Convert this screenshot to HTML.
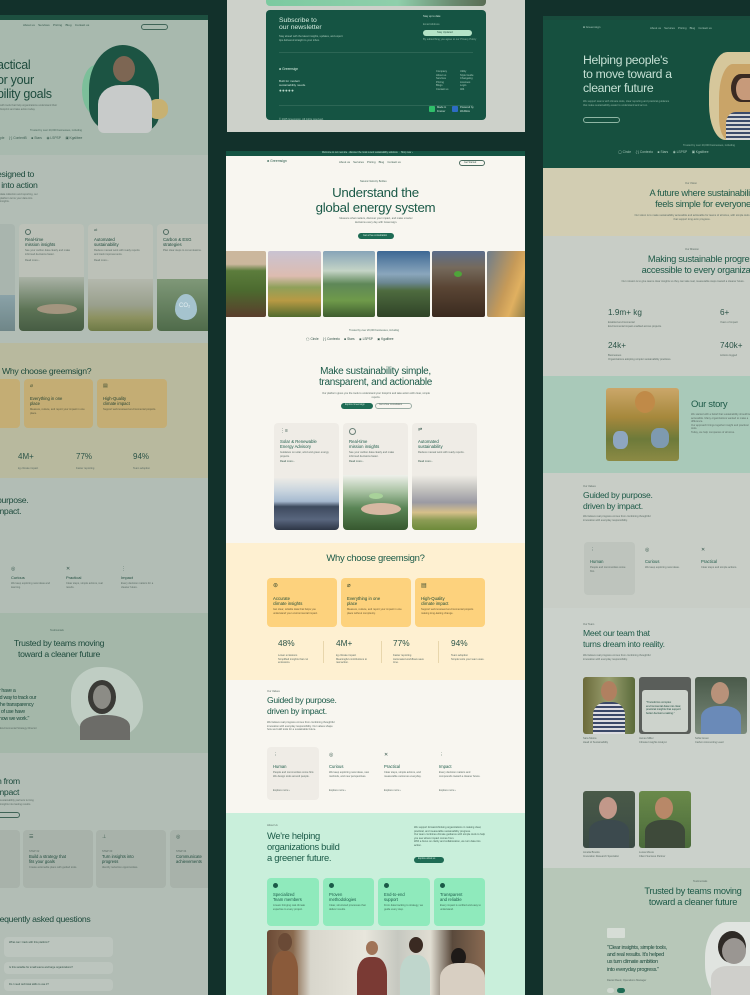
<!DOCTYPE html>
<html><head><meta charset="utf-8"><style>
*{margin:0;padding:0;box-sizing:border-box}
body{width:750px;height:995px;background:#12312b;position:relative;overflow:hidden;font-family:"Liberation Sans",sans-serif}
.a{position:absolute}
.t{position:absolute;white-space:nowrap;line-height:1.1}
.tiny{position:absolute;font-size:2.6px;line-height:1.35;color:#5a6b64}
.h{position:absolute;color:#1b5a48;letter-spacing:-0.3px;line-height:1.1;white-space:nowrap}
.r{border-radius:4px}
</style></head><body>

<!-- ============ LEFT PANEL ============ -->
<div class="a" style="left:0;top:15px;width:208px;height:980px;background:#b2bdb5;overflow:hidden">
  <div class="a" style="left:0;top:0;width:208px;height:5px;background:#1d5040"></div>
  <div class="a" style="left:0;top:5px;width:208px;height:135px;background:#a8b9ae"></div>
  <div class="t" style="left:23px;top:9px;font-size:3px;color:#33574a">About us &nbsp;&nbsp; Services &nbsp;&nbsp; Pricing &nbsp;&nbsp; Blog &nbsp;&nbsp; Contact us</div>
  <div class="a" style="left:141px;top:9px;width:27px;height:6px;border:0.6px solid #3f6457;border-radius:4px"></div>
  <div class="h" style="left:-3px;top:43px;font-size:12.5px;color:#1e4b3d;line-height:14.5px">actical<br>or your<br>bility goals</div>
  <div class="tiny" style="left:0;top:89px;width:62px">with tools that help organizations understand their footprint and take action today.</div>
  <!-- hero blob -->
  <div class="a" style="left:82px;top:50px;width:28px;height:50px;background:#7cbf9a;border-radius:50% 40% 40% 50%"></div>
  <div class="a" style="left:89px;top:30px;width:70px;height:88px;background:#1c5443;border-radius:48% 52% 30% 40%/50% 50% 20% 30%"></div>
  <div class="a" style="left:148px;top:84px;width:20px;height:20px;background:#c7b172;border-radius:45%"></div>
  <div class="a" style="left:113px;top:41px;width:22px;height:26px;background:#7d6653;border-radius:50%"></div>
  <div class="a" style="left:98px;top:70px;width:54px;height:48px;background:#c8cbca;border-radius:40% 40% 6px 6px"></div>
  <div class="t" style="left:30px;top:115px;font-size:2.6px;color:#47665a">Trusted by over 20,000 businesses, including</div>
  <div class="t" style="left:0;top:122px;font-size:3.3px;color:#3d5e52">ple &nbsp;&nbsp;&nbsp; {·} ContextB &nbsp;&nbsp;&nbsp; ■ Stars &nbsp;&nbsp;&nbsp; ◉ LSPSP &nbsp;&nbsp;&nbsp; ▣ Kgalibee</div>
  <!-- section designed -->
  <div class="h" style="left:-3px;top:154px;font-size:8.7px;color:#1e4b3d;line-height:10.5px">esigned to<br>t into action</div>
  <div class="tiny" style="left:0;top:178px;width:40px">data collection and reporting, our platform turns your data into insights.</div>
  <div class="a r" style="left:-6px;top:209px;width:21px;height:107px;background:#a9b5ae"></div>
  <div class="a" style="left:-6px;top:280px;width:21px;height:36px;background:linear-gradient(#8aa2a8,#6f8688)"></div>
  <div class="a r" style="left:19px;top:209px;width:65px;height:107px;background:#bcc1b8;overflow:hidden">
    <div class="a" style="left:6px;top:5px;width:6px;height:6px;border:0.7px solid #4e6a60;border-radius:50%"></div>
    <div class="t" style="left:6px;top:14px;font-size:4.3px;color:#1f4b3d;line-height:4.8px">Real-time<br>mission insights</div>
    <div class="tiny" style="left:6px;top:25px;width:50px">See your carbon data clearly and make informed decisions faster.</div>
    <div class="tiny" style="left:6px;top:35px">Read more ›</div>
    <div class="a" style="left:0;top:53px;width:65px;height:54px;background:linear-gradient(#aab3a6,#5d7456 60%,#465c43)"></div>
    <div class="a" style="left:18px;top:80px;width:40px;height:10px;background:#a3957f;border-radius:50%"></div>
  </div>
  <div class="a r" style="left:88px;top:209px;width:65px;height:107px;background:#bcc1b8;overflow:hidden">
    <div class="t" style="left:6px;top:4px;font-size:4px;color:#4e6a60">⇌</div>
    <div class="t" style="left:6px;top:14px;font-size:4.3px;color:#1f4b3d;line-height:4.8px">Automated<br>sustainability</div>
    <div class="tiny" style="left:6px;top:25px;width:50px">Reduce manual work with ready reports and track improvements.</div>
    <div class="tiny" style="left:6px;top:35px">Read more ›</div>
    <div class="a" style="left:0;top:55px;width:65px;height:52px;background:linear-gradient(#b4b8ad,#9aa08d 50%,#8c915f 75%,#6d7a46)"></div>
  </div>
  <div class="a r" style="left:157px;top:209px;width:60px;height:107px;background:#bcc1b8;overflow:hidden">
    <div class="a" style="left:6px;top:5px;width:6px;height:6px;border:0.7px solid #4e6a60;border-radius:50%"></div>
    <div class="t" style="left:6px;top:14px;font-size:4.3px;color:#1f4b3d;line-height:4.8px">Carbon &amp; ESG<br>strategies</div>
    <div class="tiny" style="left:6px;top:25px;width:50px">Plan clear steps to cut emissions.</div>
    <div class="a" style="left:0;top:55px;width:60px;height:52px;background:linear-gradient(#7f9878,#4f6b4a)"></div>
    <div class="a" style="left:18px;top:70px;width:22px;height:26px;background:#a5c3ce;border-radius:50% 50% 50% 50%/60% 60% 40% 40%"></div>
    <div class="t" style="left:22px;top:79px;font-size:6px;color:#e4eef0">CO₂</div>
  </div>
  <!-- yellow -->
  <div class="a" style="left:0;top:328px;width:208px;height:135px;background:#b8b99e"></div>
  <div class="h" style="left:2px;top:352px;font-size:8.7px;color:#1e4b3d">Why choose greemsign?</div>
  <div class="a r" style="left:-6px;top:364px;width:26px;height:49px;background:#c4ad74"></div>
  <div class="a r" style="left:24px;top:364px;width:69px;height:49px;background:#c4ad74">
    <div class="t" style="left:6px;top:5px;font-size:5px;color:#3d4e33">⌀</div>
    <div class="t" style="left:6px;top:18px;font-size:4.2px;color:#1f3f30;line-height:4.7px">Everything in one<br>place</div>
    <div class="tiny" style="left:6px;top:29px;width:55px;color:#5a5a40">Measure, reduce, and report your impact in one place.</div>
  </div>
  <div class="a r" style="left:97px;top:364px;width:70px;height:49px;background:#c4ad74">
    <div class="t" style="left:6px;top:5px;font-size:5px;color:#3d4e33">▤</div>
    <div class="t" style="left:6px;top:18px;font-size:4.2px;color:#1f3f30;line-height:4.7px">High-Quality<br>climate impact</div>
    <div class="tiny" style="left:6px;top:29px;width:55px;color:#5a5a40">Support well-reviewed environmental projects.</div>
  </div>
  <div class="t" style="left:18px;top:438px;font-size:8px;color:#2c5448">4M+</div>
  <div class="t" style="left:76px;top:438px;font-size:8px;color:#2c5448">77%</div>
  <div class="t" style="left:133px;top:438px;font-size:8px;color:#2c5448">94%</div>
  <div class="tiny" style="left:18px;top:452px">kg climate impact</div>
  <div class="tiny" style="left:76px;top:452px">Faster reporting</div>
  <div class="tiny" style="left:133px;top:452px">Team adoption</div>
  <!-- values -->
  <div class="h" style="left:-3px;top:480px;font-size:8.7px;color:#1e4b3d;line-height:10.5px">purpose.<br>mpact.</div>
  <div class="t" style="left:11px;top:552px;font-size:5px;color:#3a5a4f">◎</div>
  <div class="t" style="left:66px;top:552px;font-size:5px;color:#3a5a4f">✕</div>
  <div class="t" style="left:121px;top:552px;font-size:5px;color:#3a5a4f">⋮</div>
  <div class="t" style="left:11px;top:561px;font-size:4px;color:#1f4b3d">Curious</div>
  <div class="t" style="left:66px;top:561px;font-size:4px;color:#1f4b3d">Practical</div>
  <div class="t" style="left:121px;top:561px;font-size:4px;color:#1f4b3d">Impact</div>
  <div class="tiny" style="left:11px;top:567px;width:40px">We keep exploring new ideas and learning.</div>
  <div class="tiny" style="left:66px;top:567px;width:40px">Clear steps, simple actions, real results.</div>
  <div class="tiny" style="left:121px;top:567px;width:40px">Every decision matters for a cleaner future.</div>
  <!-- testimonial -->
  <div class="a" style="left:0;top:598px;width:208px;height:140px;background:#a4b7a9"></div>
  <div class="t" style="left:50px;top:615px;font-size:2.5px;color:#47665a">Testimonials</div>
  <div class="h" style="left:0;top:623px;width:118px;text-align:center;font-size:8.7px;color:#1e4b3d;line-height:11px">Trusted by teams moving<br>toward a cleaner future</div>
  <div class="h" style="left:-3px;top:673px;font-size:5.3px;color:#1e4b3d;line-height:7px">ly have a<br>ed way to track our<br>The transparency<br>e of use have<br>l how we work."</div>
  <div class="tiny" style="left:0;top:712px">Environmental Strategy Director</div>
  <div class="a" style="left:71px;top:652px;width:72px;height:72px;background:#bfcdc3;border-radius:40% 55% 45% 50%"></div>
  <div class="a" style="left:88px;top:665px;width:28px;height:34px;background:#3a3a36;border-radius:50%"></div>
  <div class="a" style="left:93px;top:670px;width:18px;height:24px;background:#8c8c86;border-radius:50%"></div>
  <div class="a" style="left:80px;top:700px;width:50px;height:25px;background:#6c6c68;border-radius:45% 45% 0 0"></div>
  <!-- growth -->
  <div class="h" style="left:-3px;top:761px;font-size:8.7px;color:#1e4b3d;line-height:11px">h from<br>mpact</div>
  <div class="tiny" style="left:0;top:784px;width:35px">sustainability partners turning insights into lasting results.</div>
  <div class="a" style="left:-6px;top:797px;width:26px;height:6px;border:0.6px solid #3f6457;border-radius:4px"></div>
  <div class="a r" style="left:-6px;top:815px;width:26px;height:58px;background:#a8b2aa"></div>
  <div class="a r" style="left:23px;top:815px;width:70px;height:58px;background:#a8b2aa">
    <div class="t" style="left:6px;top:5px;font-size:5px;color:#3a5a4f">☰</div>
    <div class="tiny" style="left:6px;top:20px">STEP 02</div>
    <div class="t" style="left:6px;top:25px;font-size:4.2px;color:#1f4b3d;line-height:4.7px">Build a strategy that<br>fits your goals</div>
    <div class="tiny" style="left:6px;top:36px;width:58px">Create actionable plans with guided tools.</div>
  </div>
  <div class="a r" style="left:96px;top:815px;width:70px;height:58px;background:#a8b2aa">
    <div class="t" style="left:6px;top:5px;font-size:5px;color:#3a5a4f">⊥</div>
    <div class="tiny" style="left:6px;top:20px">STEP 03</div>
    <div class="t" style="left:6px;top:25px;font-size:4.2px;color:#1f4b3d;line-height:4.7px">Turn insights into<br>progress</div>
    <div class="tiny" style="left:6px;top:36px;width:58px">Identify reduction opportunities.</div>
  </div>
  <div class="a r" style="left:170px;top:815px;width:50px;height:58px;background:#a8b2aa">
    <div class="t" style="left:6px;top:5px;font-size:5px;color:#3a5a4f">◎</div>
    <div class="tiny" style="left:6px;top:20px">STEP 04</div>
    <div class="t" style="left:6px;top:25px;font-size:4.2px;color:#1f4b3d;line-height:4.7px">Communicate<br>achievements</div>
  </div>
  <div class="h" style="left:-3px;top:900px;font-size:8.7px;color:#1e4b3d">requently asked questions</div>
  <div class="a r" style="left:4px;top:922px;width:109px;height:20px;background:#bcc5be"><div class="tiny" style="left:5px;top:4px;color:#2f4f44">What can I track with this platform?</div></div>
  <div class="a r" style="left:4px;top:947px;width:109px;height:12px;background:#bcc5be"><div class="tiny" style="left:5px;top:4px;color:#2f4f44">Is this suitable for small teams and large organizations?</div></div>
  <div class="a r" style="left:4px;top:964px;width:109px;height:12px;background:#bcc5be"><div class="tiny" style="left:5px;top:4px;color:#2f4f44">Do I need technical skills to use it?</div></div>
</div>

<!-- ============ CENTER TOP PANEL ============ -->
<div class="a" style="left:227px;top:0;width:298px;height:132px;background:#cdd1ca;overflow:hidden">
  <div class="a" style="left:39px;top:-4px;width:220px;height:10px;border-radius:4px;background:linear-gradient(90deg,#7ccaa0,#8fcfab 60%,#6a8a70 85%,#5a6d55)"></div>
  <div class="a" style="left:39px;top:10px;width:220px;height:110px;border-radius:4px;background:#155443">
    <div class="t" style="left:13px;top:7px;font-size:6.8px;color:#d5ecdf;line-height:7px">Subscribe to<br>our newsletter</div>
    <div class="tiny" style="left:13px;top:25px;width:65px;color:#a9cbbb">Stay ahead with the latest insights, updates, and expert tips delivered straight to your inbox.</div>
    <div class="tiny" style="left:157px;top:5px;color:#cfe4da">Stay up to date</div>
    <div class="tiny" style="left:157px;top:13px;color:#8fb7a5">Email Address</div>
    <div class="a" style="left:157px;top:20px;width:49px;height:6px;border-radius:4px;background:#b5e3c7"></div>
    <div class="tiny" style="left:171px;top:21px;color:#2d5a48">Stay Updated</div>
    <div class="tiny" style="left:157px;top:28px;color:#8fb7a5">By subscribing you agree to our Privacy Policy</div>
    <div class="a" style="left:13px;top:42px;width:194px;height:0.5px;background:#2c6655"></div>
    <div class="t" style="left:13px;top:58px;font-size:3.3px;color:#d5ecdf">♣ Greemsign</div>
    <div class="tiny" style="left:13px;top:69px;color:#cfe4da;font-size:3px">Built for modern<br>sustainability needs.</div>
    <div class="t" style="left:13px;top:79px;font-size:4.5px;color:#b8d8ca;letter-spacing:0.3px">●●●●●</div>
    <div class="tiny" style="left:170px;top:60px;color:#a9cbbb">Company<br>About us<br>Services<br>Pricing<br>Blogs<br>Contact us</div>
    <div class="tiny" style="left:194px;top:60px;color:#a9cbbb">Utility<br>Style Guide<br>Changelog<br>Licenses<br>Login<br>404</div>
    <div class="a" style="left:13px;top:95px;width:194px;height:0.5px;background:#2c6655"></div>
    <div class="tiny" style="left:13px;top:108px;color:#a9cbbb">© 2025 Greemsign. All rights reserved.</div>
    <div class="a" style="left:163px;top:96px;width:6px;height:6px;background:#2fbf6a;border-radius:1px"></div>
    <div class="tiny" style="left:171px;top:96px;color:#cfe4da">Made in<br>Framer</div>
    <div class="a" style="left:186px;top:96px;width:6px;height:6px;background:#2d6cc4;border-radius:1px"></div>
    <div class="tiny" style="left:194px;top:96px;color:#cfe4da">Powered by<br>Webflow</div>
  </div>
</div>

<!-- ============ CENTER MAIN PANEL ============ -->
<div class="a" style="left:226px;top:151px;width:299px;height:844px;background:#f8f6f0;overflow:hidden">
  <div class="a" style="left:0;top:0;width:299px;height:5px;background:#155443"></div>
  <div class="tiny" style="left:96px;top:0.5px;color:#bfe0d0;font-size:2.3px">Welcome to our new site - discover the most recent sustainability solutions &nbsp;·&nbsp; Shop now ›</div>
  <div class="t" style="left:41px;top:9px;font-size:3.4px;color:#2a5a4a">♣ Greemsign</div>
  <div class="t" style="left:113px;top:9.5px;font-size:2.8px;color:#3c5c50">About us &nbsp;&nbsp; Services &nbsp;&nbsp; Pricing &nbsp;&nbsp; Blog &nbsp;&nbsp; Contact us</div>
  <div class="a" style="left:233px;top:8.5px;width:26px;height:6px;border:0.5px solid #4b6b5f;border-radius:4px"></div>
  <div class="tiny" style="left:238px;top:9.5px;color:#33574a;font-size:2.4px">Get Started</div>
  <div class="t" style="left:134px;top:30px;font-size:2.6px;color:#4b6b5f">Natural Velocity Bottles</div>
  <div class="h" style="left:0;top:35px;width:299px;text-align:center;font-size:13.3px;line-height:14.5px;color:#1b5a48">Understand the<br>global energy system</div>
  <div class="tiny" style="left:110px;top:66px;width:80px;text-align:center">Measure what matters, discover your impact, and make smarter decisions every day with Greemsign.</div>
  <div class="a" style="left:132px;top:82px;width:36px;height:6px;border-radius:4px;background:#1e6b54"></div>
  <div class="tiny" style="left:137px;top:83px;color:#d5ecdf;font-size:2.4px">Get a free consultation</div>
  <!-- images -->
  <div class="a" style="left:0;top:100px;width:40px;height:66px;background:linear-gradient(#cbb79d 0 20%,#5c7d3c 30%,#4c6a2f 60%,#5a3e2c);border-radius:0 2px 2px 0"></div>
  <div class="a" style="left:42px;top:100px;width:53px;height:66px;background:linear-gradient(#c9c3d2,#ddbcb0 38%,#8fa05a 55%,#b89a44 75%,#516a2e);border-radius:2px"></div>
  <div class="a" style="left:97px;top:100px;width:52px;height:66px;background:linear-gradient(#87a4b8,#c4d4c6 30%,#5e8758 50%,#6f9a4a 75%,#3e5c2f);border-radius:2px"></div>
  <div class="a" style="left:151px;top:100px;width:53px;height:66px;background:linear-gradient(#3d6894,#8aa6bc 35%,#6b8792 48%,#4e6b3f 60%,#2f4327);border-radius:2px"></div>
  <div class="a" style="left:206px;top:100px;width:53px;height:66px;background:linear-gradient(#5b6d8a,#756a5c 25%,#5a4534 55%,#3a2a1f);border-radius:2px"></div>
  <div class="a" style="left:228px;top:120px;width:8px;height:6px;background:#4fa43a;border-radius:50%"></div>
  <div class="a" style="left:261px;top:100px;width:40px;height:66px;background:linear-gradient(110deg,#6e7d8c,#c69a58 50%,#e0b060 70%,#8a7a45);border-radius:2px 0 0 2px"></div>
  <div class="t" style="left:123px;top:179px;font-size:2.5px;color:#4b6b5f">Trusted by over 20,000 businesses, including</div>
  <div class="t" style="left:80px;top:186.5px;font-size:3.2px;color:#2f4f44">◯ Circle &nbsp;&nbsp;&nbsp; {·} Contexto &nbsp;&nbsp;&nbsp; ■ Stars &nbsp;&nbsp;&nbsp; ◉ LSPSP &nbsp;&nbsp;&nbsp; ▣ Kgalibee</div>
  <div class="h" style="left:0;top:215px;width:299px;text-align:center;font-size:10px;line-height:11px;color:#1b5a48">Make sustainability simple,<br>transparent, and actionable</div>
  <div class="tiny" style="left:95px;top:241px;width:110px;text-align:center">Our platform gives you the tools to understand your footprint and take action with clear, simple reports.</div>
  <div class="a" style="left:115px;top:252px;width:32px;height:6px;border-radius:4px;background:#1e6b54"></div>
  <div class="a" style="left:149px;top:252px;width:37px;height:6px;border-radius:4px;border:0.5px solid #9aaca4"></div>
  <div class="tiny" style="left:119px;top:253px;color:#d5ecdf;font-size:2.3px">Explore Greemsign</div>
  <div class="tiny" style="left:153px;top:253px;font-size:2.3px">Get a free consultation</div>
  <!-- cards -->
  <div class="a r" style="left:48px;top:272px;width:65px;height:107px;background:#efece6;overflow:hidden">
    <div class="t" style="left:6px;top:6px;font-size:5px;color:#3a5a4f">⋮≡</div>
    <div class="t" style="left:6px;top:17px;font-size:4.3px;line-height:4.9px;color:#1b5a48">Solar &amp; Renewable<br>Energy Advisory</div>
    <div class="tiny" style="left:6px;top:28px;width:52px">Guidance on solar, wind and green energy projects.</div>
    <div class="tiny" style="left:6px;top:37px;color:#33574a">Read more ›</div>
    <div class="a" style="left:0;top:55px;width:65px;height:52px;background:linear-gradient(#ecebe6,#c8d4de 25%,#a6bad0 45%,#3d4a5e 55%,#59667e 80%,#2d3646)"></div>
  </div>
  <div class="a r" style="left:117px;top:272px;width:65px;height:107px;background:#efece6;overflow:hidden">
    <div class="a" style="left:6px;top:5px;width:7px;height:7px;border:0.8px solid #6b8078;border-radius:50%"></div>
    <div class="t" style="left:6px;top:17px;font-size:4.3px;line-height:4.9px;color:#1b5a48">Real-time<br>mission insights</div>
    <div class="tiny" style="left:6px;top:28px;width:52px">See your carbon data clearly and make informed decisions faster.</div>
    <div class="tiny" style="left:6px;top:37px;color:#33574a">Read more ›</div>
    <div class="a" style="left:0;top:52px;width:65px;height:55px;background:linear-gradient(#eef0ea,#a9c2a3 30%,#5a8556 60%,#37582f)"></div>
    <div class="a" style="left:18px;top:80px;width:40px;height:12px;background:#d6b8a2;border-radius:50%"></div>
    <div class="a" style="left:26px;top:70px;width:14px;height:6px;background:#a8d29a;border-radius:50%"></div>
  </div>
  <div class="a r" style="left:186px;top:272px;width:65px;height:107px;background:#efece6;overflow:hidden">
    <div class="t" style="left:6px;top:5px;font-size:5px;color:#3a5a4f">⇌</div>
    <div class="t" style="left:6px;top:17px;font-size:4.3px;line-height:4.9px;color:#1b5a48">Automated<br>sustainability</div>
    <div class="tiny" style="left:6px;top:28px;width:52px">Reduce manual work with ready reports.</div>
    <div class="tiny" style="left:6px;top:37px;color:#33574a">Read more ›</div>
    <div class="a" style="left:0;top:52px;width:65px;height:55px;background:linear-gradient(#efece6,#c4c3c0 25%,#9b9aa3 50%,#d6c08a 68%,#8c9c55 82%,#6d8a3a)"></div>
  </div>
  <!-- yellow section -->
  <div class="a" style="left:0;top:392px;width:299px;height:137px;background:#fef0d1"></div>
  <div class="h" style="left:0;top:403px;width:299px;text-align:center;font-size:9.5px;color:#1b5a48">Why choose greemsign?</div>
  <div class="a r" style="left:41px;top:427px;width:70px;height:49px;background:#fdd27d">
    <div class="t" style="left:6px;top:5px;font-size:6px;color:#3d4e33">⊛</div>
    <div class="t" style="left:6px;top:19px;font-size:4.3px;line-height:4.8px;color:#1b4a38">Accurate<br>climate insights</div>
    <div class="tiny" style="left:6px;top:30px;width:55px;color:#6a5a34">Get clear, reliable data that helps you understand your environmental impact.</div>
  </div>
  <div class="a r" style="left:115px;top:427px;width:70px;height:49px;background:#fdd27d">
    <div class="t" style="left:6px;top:5px;font-size:6px;color:#3d4e33">⌀</div>
    <div class="t" style="left:6px;top:19px;font-size:4.3px;line-height:4.8px;color:#1b4a38">Everything in one<br>place</div>
    <div class="tiny" style="left:6px;top:30px;width:55px;color:#6a5a34">Measure, reduce, and report your impact in one place without complexity.</div>
  </div>
  <div class="a r" style="left:189px;top:427px;width:70px;height:49px;background:#fdd27d">
    <div class="t" style="left:6px;top:5px;font-size:6px;color:#3d4e33">▤</div>
    <div class="t" style="left:6px;top:19px;font-size:4.3px;line-height:4.8px;color:#1b4a38">High-Quality<br>climate impact</div>
    <div class="tiny" style="left:6px;top:30px;width:55px;color:#6a5a34">Support well-reviewed environmental projects making long-lasting change.</div>
  </div>
  <div class="t" style="left:52px;top:488px;font-size:8.3px;color:#2c5448">48%</div>
  <div class="t" style="left:110px;top:488px;font-size:8.3px;color:#2c5448">4M+</div>
  <div class="t" style="left:167px;top:488px;font-size:8.3px;color:#2c5448">77%</div>
  <div class="t" style="left:225px;top:488px;font-size:8.3px;color:#2c5448">94%</div>
  <div class="tiny" style="left:52px;top:503px;width:36px">Lower emissions<br>Simplified insights that cut emissions.</div>
  <div class="tiny" style="left:110px;top:503px;width:36px">kg climate impact<br>Meaningful contributions to real action.</div>
  <div class="tiny" style="left:167px;top:503px;width:36px">Faster reporting<br>Automated workflows save time.</div>
  <div class="tiny" style="left:225px;top:503px;width:36px">Team adoption<br>Simple tools your team uses.</div>
  <div class="a" style="left:97px;top:490px;width:0.5px;height:22px;background:#e8d6ac"></div>
  <div class="a" style="left:155px;top:490px;width:0.5px;height:22px;background:#e8d6ac"></div>
  <div class="a" style="left:212px;top:490px;width:0.5px;height:22px;background:#e8d6ac"></div>
  <!-- values -->
  <div class="tiny" style="left:41px;top:539px">Our Values</div>
  <div class="h" style="left:41px;top:544px;font-size:8.6px;line-height:11px;color:#1b5a48">Guided by purpose.<br>driven by impact.</div>
  <div class="tiny" style="left:41px;top:570px;width:70px">We believe real progress comes from combining thoughtful innovation with everyday responsibility. Our values shape how we build tools for a sustainable future.</div>
  <div class="a r" style="left:41px;top:596px;width:52px;height:53px;background:#efece6"></div>
  <div class="t" style="left:47px;top:602px;font-size:4.5px;color:#3a5a4f">⋮</div>
  <div class="t" style="left:103px;top:602px;font-size:5px;color:#3a5a4f">◎</div>
  <div class="t" style="left:158px;top:602px;font-size:5px;color:#3a5a4f">✕</div>
  <div class="t" style="left:213px;top:602px;font-size:4.5px;color:#3a5a4f">⋮</div>
  <div class="t" style="left:47px;top:614px;font-size:4.2px;color:#1b5a48">Human</div>
  <div class="t" style="left:103px;top:614px;font-size:4.2px;color:#1b5a48">Curious</div>
  <div class="t" style="left:158px;top:614px;font-size:4.2px;color:#1b5a48">Practical</div>
  <div class="t" style="left:213px;top:614px;font-size:4.2px;color:#1b5a48">Impact</div>
  <div class="tiny" style="left:47px;top:620px;width:42px">People and communities come first. We design tools around people.</div>
  <div class="tiny" style="left:103px;top:620px;width:42px">We keep exploring new ideas, new methods, and new perspectives.</div>
  <div class="tiny" style="left:158px;top:620px;width:42px">Clear steps, simple actions, and measurable outcomes everyday.</div>
  <div class="tiny" style="left:213px;top:620px;width:42px">Every decision matters and compounds toward a cleaner future.</div>
  <div class="tiny" style="left:47px;top:638px">Explore more ›</div>
  <div class="tiny" style="left:103px;top:638px">Explore more ›</div>
  <div class="tiny" style="left:158px;top:638px">Explore more ›</div>
  <div class="tiny" style="left:213px;top:638px">Explore more ›</div>
  <!-- mint -->
  <div class="a" style="left:0;top:662px;width:299px;height:182px;background:#c9efdb"></div>
  <div class="tiny" style="left:41px;top:673px">About Us</div>
  <div class="h" style="left:41px;top:679px;font-size:9.4px;line-height:11px;color:#1b5a48">We're helping<br>organizations build<br>a greener future.</div>
  <div class="tiny" style="left:188px;top:675px;width:72px;color:#3e5e52">We support forward-thinking organizations in making clear, practical, and measurable sustainability progress.<br>Our team combines climate guidance with simple tools to help you see where impact comes from.<br>With a focus on clarity and collaboration, we turn data into action.</div>
  <div class="a" style="left:188px;top:706px;width:30px;height:6px;border-radius:4px;background:#1e6b54"></div>
  <div class="tiny" style="left:192px;top:707px;color:#d5ecdf;font-size:2.3px">Explore about us</div>
  <div class="a r" style="left:41px;top:727px;width:52px;height:48px;background:#8feabc"></div>
  <div class="a r" style="left:97px;top:727px;width:51px;height:48px;background:#8feabc"></div>
  <div class="a r" style="left:152px;top:727px;width:52px;height:48px;background:#8feabc"></div>
  <div class="a r" style="left:208px;top:727px;width:51px;height:48px;background:#8feabc"></div>
  <div class="a" style="left:47px;top:732px;width:5px;height:5px;border-radius:50%;background:#1b5a48"></div>
  <div class="a" style="left:103px;top:732px;width:5px;height:5px;border-radius:50%;background:#1b5a48"></div>
  <div class="a" style="left:158px;top:732px;width:5px;height:5px;border-radius:50%;background:#1b5a48"></div>
  <div class="a" style="left:214px;top:732px;width:5px;height:5px;border-radius:50%;background:#1b5a48"></div>
  <div class="t" style="left:47px;top:742px;font-size:4.2px;line-height:4.8px;color:#1b5a48">Specialized<br>Team members</div>
  <div class="t" style="left:103px;top:742px;font-size:4.2px;line-height:4.8px;color:#1b5a48">Proven<br>methodologies</div>
  <div class="t" style="left:158px;top:742px;font-size:4.2px;line-height:4.8px;color:#1b5a48">End-to-end<br>support</div>
  <div class="t" style="left:214px;top:742px;font-size:4.2px;line-height:4.8px;color:#1b5a48">Transparent<br>and reliable</div>
  <div class="tiny" style="left:47px;top:753px;width:42px;color:#3e6a55">A team bringing real climate expertise to every project.</div>
  <div class="tiny" style="left:103px;top:753px;width:42px;color:#3e6a55">Clear, structured processes that deliver results.</div>
  <div class="tiny" style="left:158px;top:753px;width:42px;color:#3e6a55">From data tracking to strategy, we guide every step.</div>
  <div class="tiny" style="left:214px;top:753px;width:42px;color:#3e6a55">Every impact is verified and easy to understand.</div>
  <div class="a" style="left:41px;top:779px;width:218px;height:70px;border-radius:3px;background:linear-gradient(90deg,#6b4a36 0,#8a6a4e 12%,#d8d6cc 20%,#e8e6dc 45%,#c6c8c0 60%,#e0ddd2 75%,#5a4a3c 85%,#8a6a52 100%)"></div>
  <div class="a" style="left:52px;top:782px;width:14px;height:18px;border-radius:50%;background:#6a4a36"></div>
  <div class="a" style="left:46px;top:800px;width:26px;height:49px;border-radius:40% 40% 0 0;background:#8a5a3a"></div>
  <div class="a" style="left:140px;top:790px;width:12px;height:14px;border-radius:50%;background:#a07458"></div>
  <div class="a" style="left:131px;top:806px;width:30px;height:43px;border-radius:40% 40% 0 0;background:#7a3a34"></div>
  <div class="a" style="left:183px;top:786px;width:14px;height:16px;border-radius:50%;background:#3a2a22"></div>
  <div class="a" style="left:174px;top:804px;width:30px;height:45px;border-radius:40% 40% 0 0;background:#bfd6cc"></div>
  <div class="a" style="left:225px;top:797px;width:15px;height:18px;border-radius:50%;background:#1e1a18"></div>
  <div class="a" style="left:214px;top:812px;width:45px;height:37px;border-radius:40% 40% 0 0;background:#d8cfc2"></div>
</div>

<!-- ============ RIGHT PANEL ============ -->
<div class="a" style="left:543px;top:16px;width:207px;height:979px;background:#c8cdc6;overflow:hidden">
  <div class="a" style="left:0;top:0;width:207px;height:152px;background:#16503f"></div>
  <div class="a" style="left:0;top:0;width:207px;height:4px;background:#184b3c"></div>
  <div class="t" style="left:40px;top:10px;font-size:3px;color:#a6c6b8">♣ Greemsign</div>
  <div class="t" style="left:107px;top:10.5px;font-size:2.8px;color:#a6c6b8">About us &nbsp;&nbsp; Services &nbsp;&nbsp; Pricing &nbsp;&nbsp; Blog &nbsp;&nbsp; Contact us</div>
  <div class="h" style="left:40px;top:37px;font-size:12.2px;line-height:14px;color:#c5e0d4">Helping people's<br>to move toward a<br>cleaner future</div>
  <div class="tiny" style="left:40px;top:84px;width:90px;color:#8fb6a4">We support teams with climate tools, clear reporting and practical guidance that make sustainability easier to understand and act on.</div>
  <div class="a" style="left:40px;top:101px;width:37px;height:6px;border:0.5px solid #8fb6a4;border-radius:4px"></div>
  <div class="a" style="left:166px;top:36px;width:41px;height:88px;background:#d6c79b;border-radius:45% 0 0 40%"></div>
  <div class="a" style="left:176px;top:48px;width:31px;height:76px;background:#c9a468;border-radius:45% 0 0 30%"></div>
  <div class="a" style="left:188px;top:58px;width:19px;height:28px;background:#3a2a22;border-radius:50% 0 0 50%"></div>
  <div class="a" style="left:193px;top:62px;width:14px;height:22px;background:#c79a7a;border-radius:50% 0 0 50%"></div>
  <div class="a" style="left:183px;top:96px;width:24px;height:28px;background:repeating-linear-gradient(#3a4a6a 0 2px,#d6d6d6 2px 4px);border-radius:40% 0 0 0"></div>
  <div class="tiny" style="left:140px;top:128px;color:#8fb6a4">Trusted by over 20,000 businesses, including</div>
  <div class="t" style="left:75px;top:135px;font-size:3.3px;color:#a6c6b8">◯ Circle &nbsp;&nbsp;&nbsp; {·} Contexto &nbsp;&nbsp;&nbsp; ■ Stars &nbsp;&nbsp;&nbsp; ◉ LSPSP &nbsp;&nbsp;&nbsp; ▣ Kgalibee</div>
  <div class="a" style="left:0;top:152px;width:207px;height:68px;background:#d2cdb2"></div>
  <div class="tiny" style="left:142px;top:166px">Our Vision</div>
  <div class="h" style="left:85px;top:172px;width:150px;text-align:center;font-size:9.3px;line-height:11px;color:#1e5a48">A future where sustainability<br>feels simple for everyone</div>
  <div class="tiny" style="left:90px;top:198px;width:118px;text-align:center">Our vision is to make sustainability accessible and actionable for teams of all sizes, with simple tools that support long-term progress.</div>
  <div class="tiny" style="left:142px;top:232px">Our Mission</div>
  <div class="h" style="left:50px;top:238px;width:220px;text-align:center;font-size:9.3px;line-height:11px;color:#1e5a48">Making sustainable progress<br>accessible to every organization</div>
  <div class="tiny" style="left:75px;top:264px;width:130px;text-align:center">Our mission is to give teams clear insights so they can take real, measurable steps toward a cleaner future.</div>
  <div class="t" style="left:65px;top:292px;font-size:8.2px;color:#2c5448">1.9m+ kg</div>
  <div class="t" style="left:177px;top:292px;font-size:8.2px;color:#2c5448">6+</div>
  <div class="tiny" style="left:65px;top:305px;width:80px">Enabled environmental<br>Environmental impact enabled across projects.</div>
  <div class="tiny" style="left:177px;top:305px;width:40px">Years of impact</div>
  <div class="t" style="left:65px;top:325px;font-size:8.2px;color:#2c5448">24k+</div>
  <div class="t" style="left:177px;top:325px;font-size:8.2px;color:#2c5448">740k+</div>
  <div class="tiny" style="left:65px;top:338px;width:85px">Businesses<br>Organizations adopting simpler sustainability practices.</div>
  <div class="tiny" style="left:177px;top:338px;width:40px">Actions logged</div>
  <div class="a" style="left:0;top:360px;width:207px;height:97px;background:#a9c9b9"></div>
  <div class="a" style="left:63px;top:372px;width:73px;height:73px;border-radius:3px;background:linear-gradient(#cba76a,#a6883c 40%,#6d7a3a 70%,#8c8a44)"></div>
  <div class="a" style="left:92px;top:375px;width:20px;height:22px;border-radius:50%;background:#c08a48"></div>
  <div class="a" style="left:70px;top:415px;width:15px;height:18px;border-radius:40%;background:#8ea6c0"></div>
  <div class="a" style="left:108px;top:412px;width:18px;height:20px;border-radius:40%;background:#7e9ab0"></div>
  <div class="h" style="left:148px;top:384px;font-size:9.5px;color:#1e5a48">Our story</div>
  <div class="tiny" style="left:148px;top:397px;width:60px">We started with a belief that sustainability should be accessible. Many organizations wanted to make a difference.<br>Our approach brings together insight and practical tools.<br>Today, we help companies of all sizes.</div>
  <div class="tiny" style="left:40px;top:469px">Our Values</div>
  <div class="h" style="left:40px;top:474px;font-size:8.6px;line-height:11px;color:#1e5a48">Guided by purpose.<br>driven by impact.</div>
  <div class="tiny" style="left:40px;top:499px;width:70px">We believe real progress comes from combining thoughtful innovation with everyday responsibility.</div>
  <div class="a r" style="left:41px;top:526px;width:51px;height:53px;background:#bec4bd"></div>
  <div class="t" style="left:47px;top:532px;font-size:4.5px;color:#3a5a4f">⋮</div>
  <div class="t" style="left:102px;top:532px;font-size:5px;color:#3a5a4f">◎</div>
  <div class="t" style="left:158px;top:532px;font-size:5px;color:#3a5a4f">✕</div>
  <div class="t" style="left:47px;top:544px;font-size:4.2px;color:#1e5a48">Human</div>
  <div class="t" style="left:102px;top:544px;font-size:4.2px;color:#1e5a48">Curious</div>
  <div class="t" style="left:158px;top:544px;font-size:4.2px;color:#1e5a48">Practical</div>
  <div class="tiny" style="left:47px;top:550px;width:40px">People and communities come first.</div>
  <div class="tiny" style="left:102px;top:550px;width:40px">We keep exploring new ideas.</div>
  <div class="tiny" style="left:158px;top:550px;width:40px">Clear steps and simple actions.</div>
  <div class="a" style="left:0;top:608px;width:207px;height:260px;background:#cbd1cb;top:592px"></div>
  <div class="tiny" style="left:40px;top:607px">Our Team</div>
  <div class="h" style="left:40px;top:612px;font-size:8.6px;line-height:11px;color:#1e5a48">Meet our team that<br>turns dream into reality.</div>
  <div class="tiny" style="left:40px;top:638px;width:70px">We believe real progress comes from combining thoughtful innovation with everyday responsibility.</div>
  <div class="a" style="left:40px;top:661px;width:52px;height:57px;border-radius:3px;background:linear-gradient(90deg,#6b6a3a,#9aa070 50%,#5a6a3a)"></div>
  <div class="a" style="left:58px;top:665px;width:16px;height:20px;border-radius:50%;background:#b08060"></div>
  <div class="a" style="left:50px;top:686px;width:32px;height:32px;border-radius:40% 40% 0 0;background:repeating-linear-gradient(#3a4868 0 2px,#dcdce0 2px 4px)"></div>
  <div class="a" style="left:96px;top:661px;width:52px;height:57px;border-radius:3px;background:#5a5e5a"></div>
  <div class="a" style="left:99px;top:674px;width:46px;height:42px;border-radius:3px;background:#cdd3cc"></div>
  <div class="tiny" style="left:103px;top:685px;width:40px;color:#1e4b3d;font-size:2.7px">"Transforms complex environmental data into clear, practical insights that support better decision-making."</div>
  <div class="a" style="left:152px;top:661px;width:52px;height:57px;border-radius:3px;background:linear-gradient(#4a5a4a,#7a8a7a)"></div>
  <div class="a" style="left:168px;top:666px;width:18px;height:22px;border-radius:50%;background:#b8927a"></div>
  <div class="a" style="left:158px;top:690px;width:40px;height:28px;border-radius:40% 40% 0 0;background:#6a8ab8"></div>
  <div class="tiny" style="left:40px;top:721px">Sara Moore<br>Head of Sustainability</div>
  <div class="tiny" style="left:96px;top:721px">James Miller<br>Climate Insights Analyst</div>
  <div class="tiny" style="left:152px;top:721px">Sofia Green<br>Carbon Accounting Lead</div>
  <div class="a" style="left:40px;top:775px;width:52px;height:57px;border-radius:3px;background:linear-gradient(#4a5a48,#3a4a44)"></div>
  <div class="a" style="left:56px;top:781px;width:18px;height:22px;border-radius:50%;background:#c2988a"></div>
  <div class="a" style="left:46px;top:804px;width:40px;height:28px;border-radius:40% 40% 0 0;background:#3c4a4e"></div>
  <div class="a" style="left:96px;top:775px;width:52px;height:57px;border-radius:3px;background:linear-gradient(#6a8a4a,#4a6a3a)"></div>
  <div class="a" style="left:112px;top:781px;width:18px;height:22px;border-radius:50%;background:#b88868"></div>
  <div class="a" style="left:102px;top:804px;width:40px;height:28px;border-radius:40% 40% 0 0;background:#3e4a3a"></div>
  <div class="tiny" style="left:40px;top:835px">Amelia Brooks<br>Innovation Research Specialist</div>
  <div class="tiny" style="left:96px;top:835px">Lucas Moore<br>Client Success Partner</div>
  <div class="a" style="left:0;top:852px;width:207px;height:127px;background:#b7c7b8"></div>
  <div class="tiny" style="left:150px;top:864px">Testimonials</div>
  <div class="h" style="left:80px;top:870px;width:140px;text-align:center;font-size:9.3px;line-height:11px;color:#1e5a48">Trusted by teams moving<br>toward a cleaner future</div>
  <div class="a" style="left:64px;top:912px;width:18px;height:10px;border-radius:1px;background:#d6ddd6"></div>
  <div class="h" style="left:64px;top:929px;font-size:5.5px;line-height:7.2px;color:#1e4b3d">"Clear insights, simple tools,<br>and real results. It's helped<br>us turn climate ambition<br>into everyday progress."</div>
  <div class="tiny" style="left:64px;top:963px">Daniel Reed, Operations Manager</div>
  <div class="a" style="left:64px;top:972px;width:7px;height:5px;border-radius:3px;background:#d0d8d0"></div>
  <div class="a" style="left:74px;top:972px;width:8px;height:5px;border-radius:3px;background:#1e6b54"></div>
  <div class="a" style="left:162px;top:906px;width:50px;height:78px;border-radius:45% 0 0 45%;background:#e0e4e0"></div>
  <div class="a" style="left:175px;top:915px;width:28px;height:32px;border-radius:50%;background:#2e2a26"></div>
  <div class="a" style="left:179px;top:922px;width:24px;height:26px;border-radius:50%;background:#9a9692"></div>
  <div class="a" style="left:168px;top:950px;width:40px;height:30px;border-radius:40% 0 0 0;background:#cfcfcb"></div>
</div>
</body></html>
